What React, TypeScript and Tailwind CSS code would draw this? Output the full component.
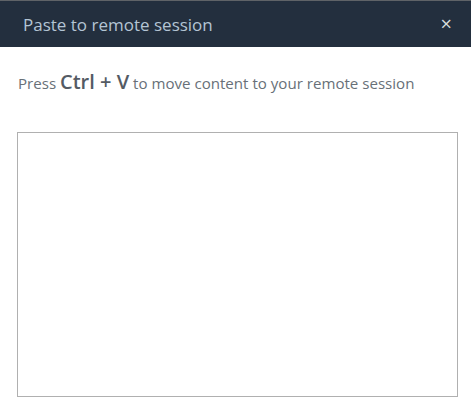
export default function App() {
  return (
    <div className="w-[471px] h-[408px] bg-white flex flex-col" style={{ fontFamily: '"Open Sans", "Noto Sans", sans-serif' }}>
      <div className="border-t border-[#5f6367] bg-[#232f3e] h-[47px] flex items-center justify-between pl-[23px] pr-[19px]">
        <span className="text-[17px] text-[#b4c5d4] leading-none">Paste to remote session</span>
        <span className="text-[#d5dbdb] text-[20px] leading-none">×</span>
      </div>
      <div className="pl-[18px] pt-[21px] h-[85px] text-[#687078] text-[15.1px] leading-[28px]">
        Press <span className="text-[20px] font-semibold text-[#545b64]">Ctrl + V</span> to move content to your remote session
      </div>
      <div className="px-[17px]">
        <textarea className="w-[441px] h-[265px] border border-[#b0b0b0] resize-none outline-none block" />
      </div>
    </div>
  );
}
